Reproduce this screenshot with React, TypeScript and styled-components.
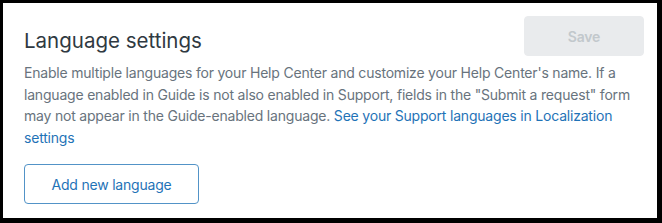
import styled, { createGlobalStyle } from "styled-components";

const GlobalStyle = createGlobalStyle`
  html, body {
    margin: 0;
    padding: 0;
    background: #000;
  }
  body {
    font-family: Inter, "Noto Sans", "Liberation Sans", sans-serif;
    -webkit-font-smoothing: antialiased;
  }
`;

const Frame = styled.div`
  box-sizing: border-box;
  width: 662px;
  height: 223px;
  border-style: solid;
  border-color: #000;
  border-width: 3px 5px 5px 3px;
  background: #fff;
`;

const Panel = styled.section`
  padding: 13px 13px 0 21px;
`;

const Header = styled.div`
  display: flex;
  justify-content: space-between;
  align-items: flex-start;
`;

const Title = styled.h2`
  margin: 11px 0 0;
  font-size: 20.5px;
  line-height: 28px;
  font-weight: 400;
  color: #2f3941;
`;

const Button = styled.button<{ $primary?: boolean }>`
  box-sizing: border-box;
  height: 40px;
  border-radius: 4px;
  font-family: inherit;
  font-size: 14px;
  font-weight: 400;
  letter-spacing: -0.2px;
  cursor: pointer;
  border: 1px solid ${(p) => (p.$primary ? "#e9ebed" : "#5293c7")};
  background: ${(p) => (p.$primary ? "#e9ebed" : "#fff")};
  color: ${(p) => (p.$primary ? "#c2c8cc" : "#1f73b7")};
`;

const SaveButton = styled(Button)`
  width: 120px;
  font-weight: 600;
`;

const AddButton = styled(Button)`
  width: 175px;
  margin-top: 16px;
`;

const Description = styled.p`
  margin: 6px 0 0;
  max-width: 620px;
  font-size: 14px;
  line-height: 21.6px;
  letter-spacing: -0.2px;
  color: #68737d;
`;

const Link = styled.a`
  color: #1f73b7;
  text-decoration: none;
`;

export default function App() {
  return (
    <>
      <GlobalStyle />
      <Frame>
        <Panel>
          <Header>
            <Title>Language settings</Title>
            <SaveButton $primary disabled>
              Save
            </SaveButton>
          </Header>
          <Description>
            Enable multiple languages for your Help Center and customize your
            Help Center's name. If a language enabled in Guide is not also
            enabled in Support, fields in the "Submit a request" form may not
            appear in the Guide-enabled language.{" "}
            <Link href="#">See your Support languages in Localization settings</Link>
          </Description>
          <AddButton>Add new language</AddButton>
        </Panel>
      </Frame>
    </>
  );
}
